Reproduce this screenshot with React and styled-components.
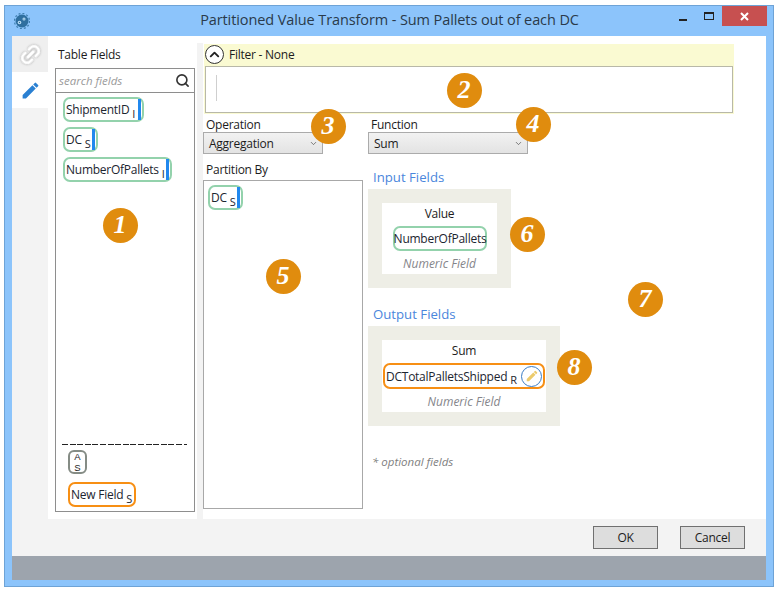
import React from "react";
import styled, { createGlobalStyle } from "styled-components";
import { Search, ChevronDown, ChevronUp, Link2 } from "lucide-react";

const Global = createGlobalStyle`
  html, body { margin: 0; padding: 0; background: #fff; }
  body { font-family: "Open Sans", "Noto Sans", sans-serif; font-size: 12px; letter-spacing: -0.25px; color: #1c1c1c; }
  * { box-sizing: border-box; }
`;

const Page = styled.div`
  position: relative;
  width: 778px;
  height: 592px;
  padding: 5px 4px;
`;
const Win = styled.div`
  width: 770px;
  height: 582px;
  background: #8cc4fb;
  border: 1px solid #6ea3d6;
  padding: 0 7px 6px;
  display: flex;
  flex-direction: column;
`;
const TitleBar = styled.div`
  height: 30px;
  flex: none;
  display: flex;
  position: relative;
  align-items: flex-start;
  margin-right: -1px;
`;
const AppIcon = styled.svg`
  width: 16px;
  height: 16px;
  margin: 7px 0 0 2px;
`;
const Title = styled.div`
  position: absolute;
  left: 0;
  right: 0;
  top: 4px;
  text-align: center;
  font-size: 14.5px;
  letter-spacing: -0.1px;
  line-height: 20px;
  color: #2a3a4a;
`;
const WinControls = styled.div`
  margin-left: auto;
  display: flex;
  align-items: flex-start;
`;
const WinBtn = styled.div`
  width: ${p => p.$w}px;
  height: 20px;
  display: flex;
  align-items: center;
  justify-content: center;
  background: ${p => p.$bg || "transparent"};
`;
const MinGlyph = styled.div`
  width: 8px;
  height: 2px;
  background: #222;
  margin-top: 7px;
`;
const MaxGlyph = styled.div`
  width: 10px;
  height: 8px;
  border: 1px solid #222;
  border-top-width: 2px;
`;
const Content = styled.div`
  flex: 1;
  display: flex;
  flex-direction: column;
  background: #f3f3f3;
`;
const Body = styled.div`
  height: 483px;
  flex: none;
  display: flex;
`;
const Sidebar = styled.div`
  width: 36px;
  flex: none;
  display: flex;
  flex-direction: column;
`;
const SideTab = styled.div`
  height: 36px;
  display: flex;
  align-items: center;
  justify-content: center;
  background: ${p => (p.$active ? "#fff" : "#efefef")};
`;
const Main = styled.div`
  flex: 1;
  background: #fff;
  display: flex;
  padding: 0 32px 0 7px;
`;
const FieldPanel = styled.div`
  width: 140px;
  flex: none;
  display: flex;
  flex-direction: column;
  padding-bottom: 7px;
`;
const PanelTitle = styled.div`
  height: 32px;
  padding: 11px 0 0 3px;
  line-height: 16px;
`;
const SearchBox = styled.div`
  height: 24px;
  border: 1px solid #8e8e8e;
  border-bottom: 0;
  background: #fff;
  display: flex;
  align-items: center;
  justify-content: space-between;
  padding: 0 4px 0 3px;
  font-style: italic;
  font-size: 11.5px;
  letter-spacing: 0;
  color: #9a9a9a;
`;
const FieldList = styled.div`
  flex: 1;
  border: 1px solid #8e8e8e;
  display: flex;
  flex-direction: column;
  align-items: flex-start;
  gap: 5px;
  padding: 4px 7px 4px;
`;
const Chip = styled.div`
  height: ${p => p.$h || 25}px;
  flex: none;
  border: 2px solid ${p => (p.$new ? "#f78f14" : "#93d2ac")};
  border-radius: 7px;
  display: flex;
  align-items: center;
  justify-content: ${p => (p.$center ? "center" : "flex-start")};
  padding: 0 0 0 1px;
  background: #fff;
  white-space: nowrap;
  color: #1c2530;
  width: ${p => p.$w}px;
`;
const Sub = styled.span`
  font-size: 11px;
  margin: 8px 0 0 3px;
  line-height: 12px;
`;
const TypeBar = styled.span`
  width: 3px;
  height: 21px;
  background: #2188ee;
  margin-left: auto;
  margin-right: 1px;
`;
const Spacer = styled.div`
  flex: 1;
`;
const Dashes = styled.div`
  height: 1px;
  width: 125px;
  margin: 0 0 0 -1px;
  background: repeating-linear-gradient(90deg, #222 0 6px, transparent 6px 7.6px);
`;
const TypeChip = styled.div`
  width: 19px;
  height: 24px;
  flex: none;
  border: 2px solid #858c85;
  border-radius: 6px;
  display: flex;
  flex-direction: column;
  align-items: center;
  justify-content: center;
  font-family: "Liberation Sans", sans-serif;
  font-size: 9.5px;
  line-height: 11px;
  letter-spacing: 0;
  margin: 0 0 3px 5px;
`;
const NewChip = styled(Chip)`
  margin-left: 5px;
  padding-left: 1px;
`;
const Gutter = styled.div`
  width: 6px;
  flex: none;
  margin: 7px 0 0 2px;
  background: #f3f3f3;
`;
const Work = styled.div`
  flex: 1;
  display: flex;
  flex-direction: column;
  padding-top: 8px;
`;
const FilterBox = styled.div`
  margin-left: 1px;
  height: 70px;
  flex: none;
  background: #fafad2;
  padding: 0 1px 1px;
  display: flex;
  flex-direction: column;
`;
const FilterHead = styled.div`
  height: 22px;
  display: flex;
  align-items: center;
  gap: 5px;
  line-height: 20px;
  padding-bottom: 1px;
`;
const Collapse = styled.div`
  width: 19px;
  height: 19px;
  border-radius: 50%;
  border: 1.5px solid #333;
  background: #fff;
  display: flex;
  align-items: center;
  justify-content: center;
`;
const FilterInput = styled.div`
  flex: 1;
  border: 1px solid #b8b8a8;
  background: #fff;
  padding: 8px 0 11px 10px;
  display: flex;
`;
const Caret = styled.div`
  width: 1px;
  background: #cfcfcf;
`;
const Columns = styled.div`
  flex: 1;
  display: flex;
  gap: 5px;
`;
const LeftCol = styled.div`
  width: 160px;
  flex: none;
  display: flex;
  flex-direction: column;
  padding-bottom: 10px;
`;
const RightCol = styled.div`
  flex: 1;
  display: flex;
  flex-direction: column;
  align-items: flex-start;
`;
const FieldLabel = styled.div`
  height: ${p => p.$h || 18}px;
  line-height: 16px;
  padding: ${p => p.$pt || 3}px 0 0 3px;
`;
const Select = styled.div`
  width: ${p => p.$w}px;
  height: 22px;
  flex: none;
  border: 1px solid #ababab;
  background: linear-gradient(#f2f2f2, #e3e3e3);
  display: flex;
  align-items: center;
  justify-content: space-between;
  padding: 0 4px 0 5px;
`;
const PartitionBox = styled.div`
  flex: 1;
  border: 1px solid #a8a8a8;
  padding: 4px;
  display: flex;
  align-items: flex-start;
`;
const SectionTitle = styled.div`
  color: #4a86dc;
  font-size: 13.2px;
  letter-spacing: 0;
  line-height: 18px;
  padding-left: 5px;
  margin: ${p => p.$mt || 0}px 0 3px;
`;
const FieldCard = styled.div`
  width: ${p => p.$w}px;
  background: #eeeee6;
  padding: 14px;
`;
const CardInner = styled.div`
  background: #fff;
  display: flex;
  flex-direction: column;
  align-items: center;
  height: ${p => p.$h}px;
  padding-top: ${p => p.$pt}px;
`;
const CardLabel = styled.div`
  line-height: 16px;
  margin-bottom: ${p => p.$mb}px;
`;
const CardHint = styled.div`
  margin-top: 5px;
  font-style: italic;
  color: #85858a;
  font-size: 12px;
  letter-spacing: 0;
  line-height: 16px;
`;
const Note = styled.div`
  margin: 28px 0 0 4px;
  font-style: italic;
  font-size: 11.5px;
  letter-spacing: 0;
  color: #7f7f7f;
  line-height: 16px;
`;
const EditBtn = styled.div`
  width: 21px;
  height: 21px;
  flex: none;
  border-radius: 50%;
  border: 1px solid #3a7cc4;
  margin: 0 1px 0 auto;
  display: flex;
  align-items: center;
  justify-content: center;
`;
const Footer = styled.div`
  height: 37px;
  flex: none;
  display: flex;
  justify-content: flex-end;
  gap: 22px;
  padding: 7px 21px 0 0;
`;
const Button = styled.div`
  width: 65px;
  height: 23px;
  background: #dddddd;
  border: 1px solid #707070;
  display: flex;
  align-items: center;
  justify-content: center;
`;
const Strip = styled.div`
  flex: 1;
  background: #9da4ad;
`;
const Badge = styled.div`
  position: absolute;
  width: 35px;
  height: 35px;
  border-radius: 50%;
  background: #e08c0e;
  color: #fff;
  font-family: "Liberation Serif", serif;
  font-style: italic;
  font-weight: bold;
  font-size: 26px;
  letter-spacing: 0;
  display: flex;
  align-items: center;
  justify-content: center;
`;

const badges = [
  [1, 120, 225], [2, 464, 90], [3, 328, 126], [4, 533, 124],
  [5, 283, 276], [6, 527, 234], [7, 645, 299], [8, 574, 367],
];

const FieldChip = ({ name, type, w }) => (
  <Chip $w={w}>
    <span>{name}</span>
    <Sub>{type}</Sub>
    <TypeBar />
  </Chip>
);

const Pencil = ({ size, color }) => (
  <svg width={size} height={size} viewBox="0 0 24 24">
    <path fill={color} d="M3 17.2V21h3.8L18 9.8 14.2 6 3 17.2zM20.7 7.1a1 1 0 0 0 0-1.4l-2.4-2.4a1 1 0 0 0-1.4 0l-1.8 1.8 3.8 3.8 1.8-1.8z" />
  </svg>
);

export default function App() {
  return (
    <Page>
      <Global />
      <Win>
        <TitleBar>
          <AppIcon viewBox="0 0 16 16">
            <circle cx="8" cy="8" r="6.5" fill="#2f6f9f" />
            <circle cx="8" cy="8" r="7.6" fill="none" stroke="#3f7fae" strokeWidth="1.2" strokeDasharray="2 2" />
            <circle cx="5.5" cy="9.5" r="1.8" fill="#bfe0f5" />
            <circle cx="10" cy="6" r="1.5" fill="#bfe0f5" />
            <circle cx="5.5" cy="9.5" r=".7" fill="#2f6f9f" />
            <circle cx="10" cy="6" r=".6" fill="#2f6f9f" />
          </AppIcon>
          <Title>Partitioned Value Transform - Sum Pallets out of each DC</Title>
          <WinControls>
            <WinBtn $w={26}><MinGlyph /></WinBtn>
            <WinBtn $w={26}><MaxGlyph /></WinBtn>
            <WinBtn $w={45} $bg="#c75050">
              <svg width="9" height="9" viewBox="0 0 9 9">
                <path d="M1 1l7 7M8 1L1 8" stroke="#fff" strokeWidth="2" />
              </svg>
            </WinBtn>
          </WinControls>
        </TitleBar>
        <Content>
          <Body>
            <Sidebar>
              <SideTab>
                <Link2 size={23} color="#fff" strokeWidth={3.2} style={{ transform: "rotate(-45deg)", filter: "drop-shadow(0 0 1px #999)" }} />
              </SideTab>
              <SideTab $active>
                <Pencil size={21} color="#2a80d2" />
              </SideTab>
            </Sidebar>
            <Main>
              <FieldPanel>
                <PanelTitle>Table Fields</PanelTitle>
                <SearchBox>
                  search fields
                  <Search size={15} color="#333" strokeWidth={2.6} />
                </SearchBox>
                <FieldList>
                  <FieldChip name="ShipmentID" type="I" w={81} />
                  <FieldChip name="DC" type="S" w={35} />
                  <FieldChip name="NumberOfPallets" type="I" w={109} />
                  <Spacer />
                  <Dashes />
                  <TypeChip><span>A</span><span>S</span></TypeChip>
                  <NewChip $new $w={68}>
                    <span>New Field</span>
                    <Sub>S</Sub>
                  </NewChip>
                </FieldList>
              </FieldPanel>
              <Gutter />
              <Work>
                <FilterBox>
                  <FilterHead>
                    <Collapse><ChevronUp size={15} color="#222" strokeWidth={3} /></Collapse>
                    Filter - None
                  </FilterHead>
                  <FilterInput><Caret /></FilterInput>
                </FilterBox>
                <Columns>
                  <LeftCol>
                    <FieldLabel>Operation</FieldLabel>
                    <Select $w={120}>
                      Aggregation
                      <ChevronDown size={9} color="#555" strokeWidth={2} />
                    </Select>
                    <FieldLabel $h={26} $pt={8}>Partition By</FieldLabel>
                    <PartitionBox>
                      <FieldChip name="DC" type="S" w={35} />
                    </PartitionBox>
                  </LeftCol>
                  <RightCol>
                    <FieldLabel>Function</FieldLabel>
                    <Select $w={160}>
                      Sum
                      <ChevronDown size={9} color="#555" strokeWidth={2} />
                    </Select>
                    <SectionTitle $mt={14}>Input Fields</SectionTitle>
                    <FieldCard $w={143}>
                      <CardInner $h={71} $pt={3}>
                        <CardLabel $mb={4}>Value</CardLabel>
                        <Chip $w={94} $center>NumberOfPallets</Chip>
                        <CardHint>Numeric Field</CardHint>
                      </CardInner>
                    </FieldCard>
                    <SectionTitle $mt={17}>Output Fields</SectionTitle>
                    <FieldCard $w={192}>
                      <CardInner $h={72} $pt={3}>
                        <CardLabel $mb={4}>Sum</CardLabel>
                        <Chip $new $w={162} $h={26}>
                          <span>DCTotalPalletsShipped</span>
                          <Sub>R</Sub>
                          <EditBtn><Pencil size={14} color="#eccb6c" /></EditBtn>
                        </Chip>
                        <CardHint>Numeric Field</CardHint>
                      </CardInner>
                    </FieldCard>
                    <Note>* optional fields</Note>
                  </RightCol>
                </Columns>
              </Work>
            </Main>
          </Body>
          <Footer>
            <Button>OK</Button>
            <Button>Cancel</Button>
          </Footer>
          <Strip />
        </Content>
      </Win>
      {badges.map(([n, x, y]) => (
        <Badge key={n} style={{ left: x - 17.5, top: y - 17.5 }}>{n}</Badge>
      ))}
    </Page>
  );
}
